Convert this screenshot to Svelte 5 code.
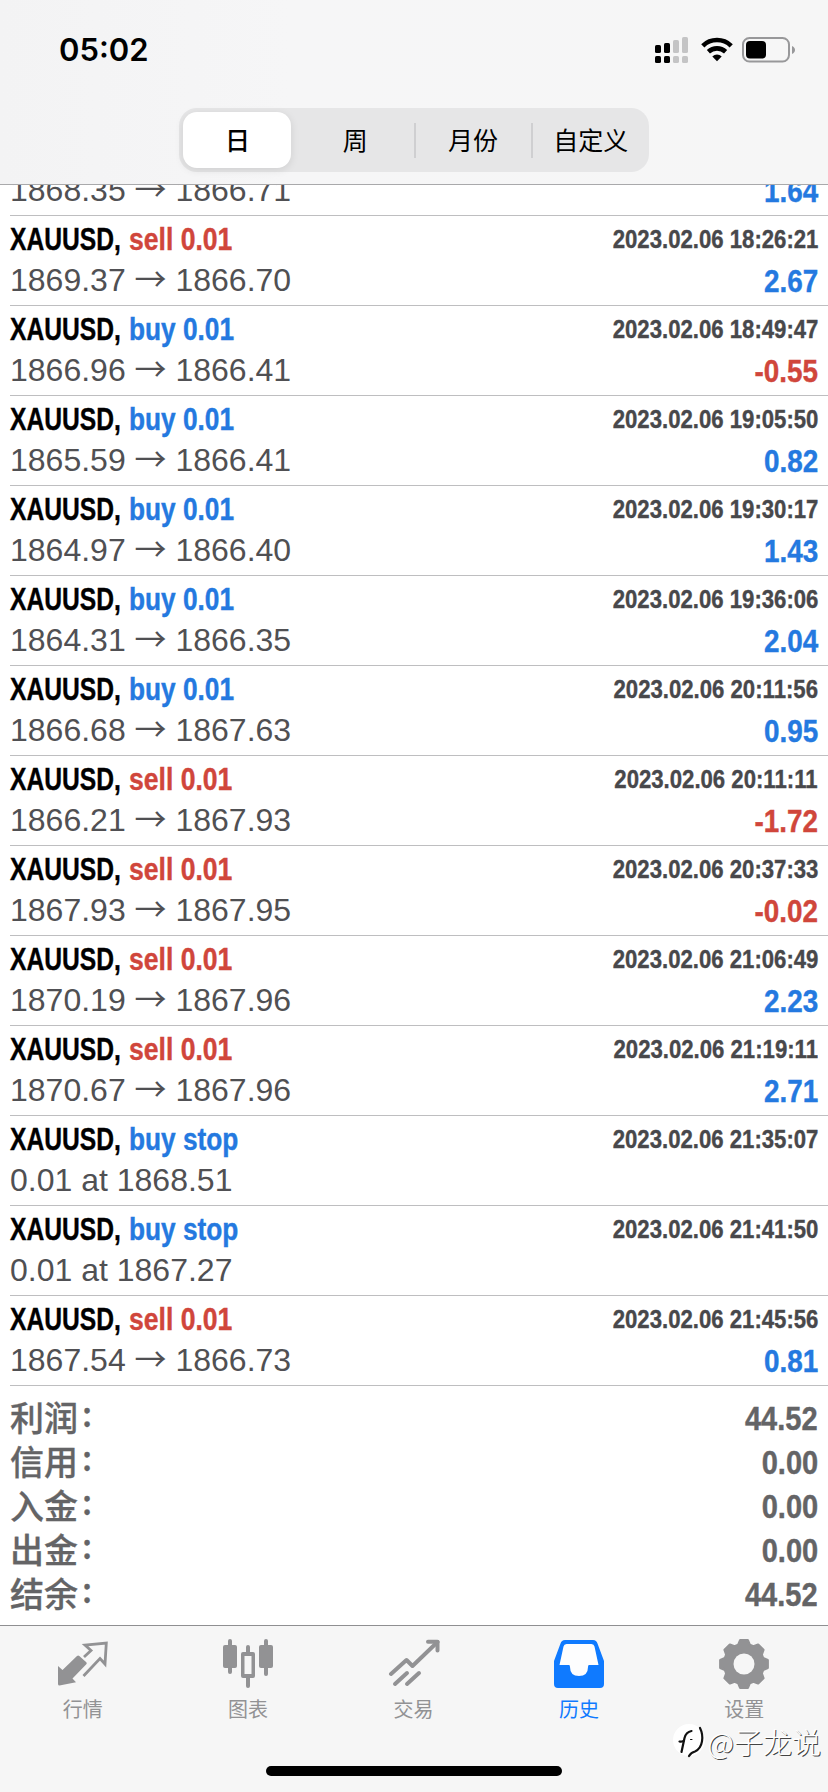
<script>
  const segments = ["日", "周", "月份", "自定义"];

  const deals = [
    { side: "sell", label: "sell 0.01", time: "2023.02.06 18:26:21", from: "1869.37", to: "1866.70", profit: "2.67" },
    { side: "buy", label: "buy 0.01", time: "2023.02.06 18:49:47", from: "1866.96", to: "1866.41", profit: "-0.55" },
    { side: "buy", label: "buy 0.01", time: "2023.02.06 19:05:50", from: "1865.59", to: "1866.41", profit: "0.82" },
    { side: "buy", label: "buy 0.01", time: "2023.02.06 19:30:17", from: "1864.97", to: "1866.40", profit: "1.43" },
    { side: "buy", label: "buy 0.01", time: "2023.02.06 19:36:06", from: "1864.31", to: "1866.35", profit: "2.04" },
    { side: "buy", label: "buy 0.01", time: "2023.02.06 20:11:56", from: "1866.68", to: "1867.63", profit: "0.95" },
    { side: "sell", label: "sell 0.01", time: "2023.02.06 20:11:11", from: "1866.21", to: "1867.93", profit: "-1.72" },
    { side: "sell", label: "sell 0.01", time: "2023.02.06 20:37:33", from: "1867.93", to: "1867.95", profit: "-0.02" },
    { side: "sell", label: "sell 0.01", time: "2023.02.06 21:06:49", from: "1870.19", to: "1867.96", profit: "2.23" },
    { side: "sell", label: "sell 0.01", time: "2023.02.06 21:19:11", from: "1870.67", to: "1867.96", profit: "2.71" },
    { side: "buy", label: "buy stop", time: "2023.02.06 21:35:07", note: "0.01 at 1868.51" },
    { side: "buy", label: "buy stop", time: "2023.02.06 21:41:50", note: "0.01 at 1867.27" },
    { side: "sell", label: "sell 0.01", time: "2023.02.06 21:45:56", from: "1867.54", to: "1866.73", profit: "0.81" },
  ];

  const totals = [
    ["利润", "44.52"],
    ["信用", "0.00"],
    ["入金", "0.00"],
    ["出金", "0.00"],
    ["结余", "44.52"],
  ];

  const tabs = [
    { id: "quotes", name: "行情" },
    { id: "chart", name: "图表" },
    { id: "trade", name: "交易" },
    { id: "history", name: "历史" },
    { id: "settings", name: "设置" },
  ];

  // Outline of an eight-toothed gear centred on 26,27
  function gearOutline() {
    const points = [];
    for (let tooth = 0; tooth < 8; tooth++) {
      for (const [offset, radius] of [[-17, 20], [-9, 24], [9, 24], [17, 20]]) {
        const angle = ((tooth * 45 + offset) * Math.PI) / 180;
        points.push(`${(26 + radius * Math.cos(angle)).toFixed(1)} ${(27 + radius * Math.sin(angle)).toFixed(1)}`);
      }
    }
    return `M${points.join("L")}Z`;
  }

  const gear = gearOutline();

  let range = "日";
  let activeTab = "history";
</script>

<div class="screen">
  <header>
    <div class="status">
      <span class="clock">05:02</span>
      <div class="status-icons">
        <svg width="34" height="27" viewBox="0 0 34 27">
          <rect x="0" y="8" width="6" height="8" rx="1.6" />
          <rect x="9" y="6" width="6" height="10" rx="1.6" />
          <g fill="#c4c4c5">
            <rect x="18" y="3" width="6" height="13" rx="1.6" />
            <rect x="27" y="0" width="6" height="16" rx="1.6" />
            <rect x="18" y="19" width="6" height="7" rx="1.6" />
            <rect x="27" y="19" width="6" height="7" rx="1.6" />
          </g>
          <rect x="0" y="19" width="6" height="7" rx="1.6" />
          <rect x="9" y="19" width="6" height="7" rx="1.6" />
        </svg>
        <svg width="32" height="27" viewBox="0 0 32 27">
          <g fill="none" stroke="#000" stroke-width="4.6">
            <path d="M1.8 8.8a20.4 20.4 0 0 1 28.4 0" />
            <path d="M7.4 14.8a12.6 12.6 0 0 1 17.2 0" />
          </g>
          <path d="M16 24.2l-4.7-4.8a7 7 0 0 1 9.4 0z" />
        </svg>
        <svg width="54" height="27" viewBox="0 0 54 27">
          <rect x="1" y="1" width="46" height="23.5" rx="6.5" fill="none" stroke="#98989a" stroke-width="2" />
          <rect x="4" y="4" width="20" height="17.5" rx="4" />
          <path d="M50 9c4 1.6 4 6.4 0 8z" fill="#98989a" />
        </svg>
      </div>
    </div>
    <div class="segmented">
      {#each segments as segment}
        <button class:selected={segment === range} on:click={() => (range = segment)}>{segment}</button>
      {/each}
    </div>
  </header>

  <main>
    <div class="deal cut">
      <div class="line prices">
        <span>1868.35 <span class="arrow">→</span> 1866.71</span>
        <span class="profit">1.64</span>
      </div>
    </div>

    {#each deals as deal}
      <div class="deal">
        <div class="line title">
          <span class="symbol">XAUUSD,</span>
          <span class="side {deal.side}">{deal.label}</span>
          <span class="time">{deal.time}</span>
        </div>
        <div class="line prices">
          {#if deal.note}
            <span>{deal.note}</span>
          {:else}
            <span>{deal.from} <span class="arrow">→</span> {deal.to}</span>
            <span class="profit" class:loss={deal.profit.startsWith("-")}>{deal.profit}</span>
          {/if}
        </div>
      </div>
    {/each}

    <div class="totals">
      {#each totals as [name, value]}
        <div class="total">
          <span class="name">{name}<span class="colon">:</span></span>
          <span class="value">{value}</span>
        </div>
      {/each}
    </div>
  </main>

  <nav>
    {#each tabs as tab}
      <button class="tab" class:active={tab.id === activeTab} on:click={() => (activeTab = tab.id)}>
        <svg width="52" height="52" viewBox="0 0 52 52" fill="currentColor">
          {#if tab.id === "quotes"}
            <path d="M1 29l4.5 4L20 19q1.2-1 2.3 0l7 6.3q1 1 0 2L15.500 41.500l3.500 3.800-16.500 3.200q-1.500 0-1.500-1.500z" />
            <path d="M27 20L34 13.500L28 8L49.300 6L48 27L43 21.500L26.500 39" fill="none" stroke="currentColor" stroke-width="2.8" />
          {:else if tab.id === "chart"}
            <rect x="1" y="8" width="14" height="23" rx="2" />
            <rect x="6" y="2" width="4" height="35" rx="2" />
            <path fill-rule="evenodd" d="M21 15h10q2 0 2 2v22q0 2-2 2H21q-2 0-2-2V17q0-2 2-2zm1.500 4v18h7V19z" />
            <rect x="24" y="8" width="4" height="9" rx="2" />
            <rect x="24" y="39" width="4" height="12" rx="2" />
            <rect x="37" y="8" width="14" height="23" rx="2" />
            <rect x="42" y="2" width="4" height="37" rx="2" />
          {:else if tab.id === "trade"}
            <g fill="none" stroke="currentColor" stroke-width="4" stroke-linecap="round" stroke-linejoin="round">
              <path d="M3 37L18.500 23l6 6L49.500 5" />
              <path d="M40 4.700h9.500V13.500" />
              <path d="M7 47L19 36M19 47L31 36" />
            </g>
          {:else if tab.id === "history"}
            <path fill="#fdfdfe" d="M11 6h30l6 24H5z" />
            <path fill="#fdfdfe" d="M16 28h20v13H16z" />
            <path fill-rule="evenodd" d="M12 3h28q3.500 0 4.500 3.500L51 24v23q0 4-4 4H5q-4 0-4-4V24L7.500 6.500Q8.500 3 12 3zm1.500 4q-2.500 0-3 2.500L6.500 28H16q1 0 1 2 0 9 9 9t9-9q0-2 1-2h9.500L41.500 9.500Q41 7 38.500 7z" />
          {:else}
            <path d={gear} stroke="currentColor" stroke-width="2.4" stroke-linejoin="round" />
            <circle cx="26" cy="27" r="10.5" fill="#f6f6f6" />
          {/if}
        </svg>
        <span>{tab.name}</span>
      </button>
    {/each}
    <div class="home-bar"></div>
    <div class="watermark">
      <svg width="36" height="36" viewBox="0 0 36 36">
        <circle cx="17" cy="17" r="16" fill="#fff" />
        <g fill="none" stroke="#111" stroke-width="2.2" stroke-linecap="round">
          <path d="M28 5c4 8 3 20-5 23.500q-4 1-6 4.500" />
          <path d="M9.500 29l3-14q1.500-6 7-7" />
          <path d="M7.500 18.500q2 .5 4-.5" />
          <path d="M18.500 16.500h1.500" stroke-width="1" />
        </g>
      </svg>
      <span>@子龙说</span>
    </div>
  </nav>
</div>

<style>
  :global(body) {
    margin: 0;
    background: #fff;
  }

  .screen {
    width: 828px;
    height: 1792px;
    display: flex;
    flex-direction: column;
    overflow: hidden;
    font-family: "Liberation Sans", "Noto Sans CJK SC", sans-serif;
  }

  button {
    border: 0;
    padding: 0;
    background: none;
    font: inherit;
    color: inherit;
  }

  header {
    height: 184px;
    flex: none;
    background: linear-gradient(90deg, #f3f3f4, #f6f6f7 35%, #f6f6f6);
    border-bottom: 1px solid #a9a9ab;
  }

  .status {
    height: 108px;
    box-sizing: border-box;
    padding: 31px 32px 0 59px;
    display: flex;
    justify-content: space-between;
    align-items: flex-start;
  }

  .clock {
    font: 600 31px/38px Inter, sans-serif;
  }

  .status-icons {
    display: flex;
    gap: 12px;
    padding-top: 6px;
  }

  .status-icons svg:last-child {
    margin-left: -3px;
  }

  .segmented {
    width: 470px;
    height: 64px;
    box-sizing: border-box;
    margin-left: 179px;
    padding: 4px 0 4px 4px;
    border-radius: 18px;
    background: #e6e6e7;
    display: flex;
  }

  .segmented button {
    flex: 1;
    position: relative;
    font-family: "Noto Sans CJK SC", sans-serif;
    font-size: 25px;
    line-height: 54px;
    padding: 0 0 2px 1px;
    color: #000;
  }

  .segmented button.selected {
    flex: 0 0 108px;
    margin-right: 5px;
    border-radius: 14px;
    background: #fff;
    font-weight: 500;
    box-shadow: 0 2px 8px rgba(0, 0, 0, 0.1);
  }

  .segmented button:nth-child(n + 3)::before {
    content: "";
    position: absolute;
    left: 0;
    top: 11px;
    width: 2px;
    height: 35px;
    background: #cfcfd1;
  }

  main {
    flex: 1;
    min-height: 0;
    background: #fff;
  }

  .deal {
    height: 90px;
    box-sizing: border-box;
    margin-left: 10px;
    padding-right: 10px;
    border-bottom: 1px solid #bebec0;
    display: flex;
    flex-direction: column;
  }

  .deal.cut {
    height: 31px;
    overflow: hidden;
    justify-content: flex-end;
  }

  .line {
    display: flex;
    flex: none;
    white-space: nowrap;
  }

  .title {
    height: 44px;
    font-size: 32px;
    font-weight: bold;
    line-height: 46px;
  }

  .symbol,
  .side,
  .time,
  .profit,
  .value {
    -webkit-text-stroke: 0.4px currentColor;
  }

  .symbol {
    width: 118.5px;
    transform: scaleX(0.77);
    transform-origin: 0 0;
    color: #000;
  }

  .side {
    transform: scaleX(0.82);
    transform-origin: 0 0;
  }

  .buy,
  .profit {
    color: #2479e0;
  }

  .sell,
  .profit.loss {
    color: #d0463b;
  }

  .side.sell {
    transform: scaleX(0.83);
  }

  .time {
    margin-left: auto;
    font-size: 26px;
    transform: scaleX(0.852);
    transform-origin: 100% 0;
    color: #48484b;
  }

  .prices {
    height: 45px;
    justify-content: space-between;
    font-size: 32px;
    line-height: 41px;
    color: #505053;
  }

  .arrow {
    font-family: "Noto Sans CJK SC", sans-serif;
    line-height: 1;
  }

  .profit {
    font-weight: bold;
    line-height: 43px;
    transform: scaleX(0.87);
    transform-origin: 100% 0;
  }

  .totals {
    padding: 10px 10px 0;
    color: #646466;
  }

  .total {
    height: 44px;
    display: flex;
    justify-content: space-between;
    font-weight: bold;
    line-height: 44px;
  }

  .name {
    font-family: "Noto Sans CJK SC", sans-serif;
    font-size: 34px;
    font-weight: 500;
    line-height: 42px;
    -webkit-text-stroke: 0.3px currentColor;
  }

  .colon {
    padding-left: 4px;
    line-height: 1;
    vertical-align: 4px;
  }

  .value {
    font-size: 33px;
    line-height: 45px;
    transform: scaleX(0.88);
    transform-origin: 100% 0;
  }

  nav {
    position: relative;
    height: 167px;
    box-sizing: border-box;
    padding-right: 1px;
    flex: none;
    display: flex;
    background: #f6f6f6;
    border-top: 1px solid #8f8f91;
  }

  .tab {
    flex: 1;
    display: flex;
    flex-direction: column;
    align-items: center;
    padding-top: 11px;
    color: #929294;
  }

  .tab span {
    font-family: "Noto Sans CJK SC", sans-serif;
    font-size: 20px;
    line-height: 34px;
    margin-top: 3px;
  }

  .tab.active {
    color: #0f7aff;
  }

  .home-bar {
    position: absolute;
    left: 266px;
    bottom: 16px;
    width: 296px;
    height: 10px;
    border-radius: 5px;
    background: #000;
  }

  .watermark {
    position: absolute;
    right: 7px;
    bottom: 31px;
    display: flex;
    align-items: center;
    color: #fff;
    font: 300 29px/40px "Noto Sans CJK SC", sans-serif;
    text-shadow: 1px 1px 0 #444;
  }
</style>
